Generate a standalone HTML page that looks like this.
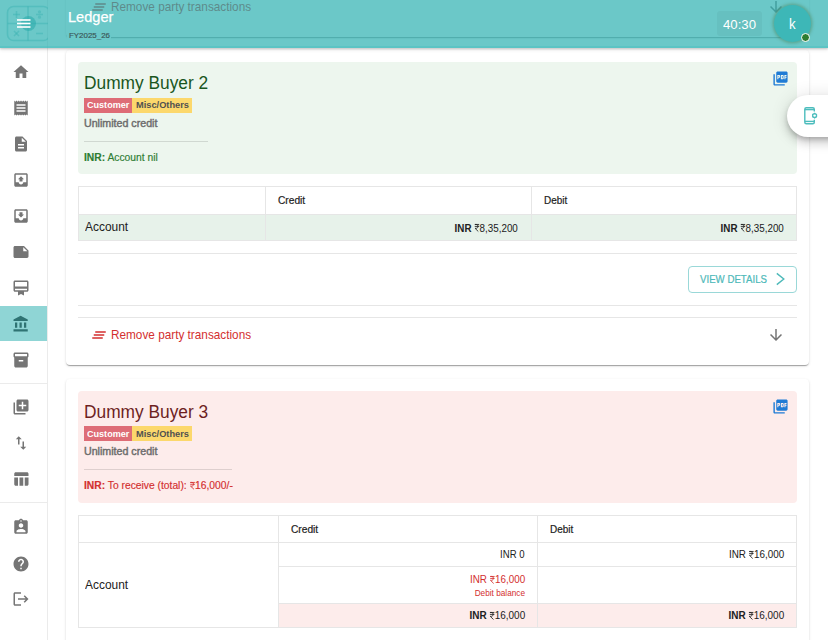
<!DOCTYPE html><html><head><meta charset="utf-8"><style>
html,body{margin:0;padding:0;width:828px;height:640px;overflow:hidden;background:#fff;font-family:"Liberation Sans", sans-serif;}
</style></head><body>
<div style="position:absolute;left:66px;top:-200px;width:743px;height:236.5px;background:#fff;border-radius:0 0 4px 4px;box-shadow:0 2px 1px -1px rgba(0,0,0,.2),0 1px 1px 0 rgba(0,0,0,.14),0 1px 3px 0 rgba(0,0,0,.12);"></div>
<svg style="position:absolute;left:89.75px;top:-2.0px;" width="18" height="18" viewBox="0 0 24 24"><path fill="#d32f2f" d="M5 13h14v-2H5v2zm-2 4h14v-2H3v2zM7 7v2h14V7H7z"/></svg>
<div style="position:absolute;top:-0.12px;font-size:11.9px;line-height:15px;color:#d32f2f;white-space:pre;left:111.4px;transform:scaleX(0.9905);transform-origin:left center;"><span style="font-weight:normal">Remove party transactions</span></div>
<svg style="position:absolute;left:767px;top:-1.8000000000000007px;" width="18" height="18" viewBox="0 0 24 24"><path fill="#757575" d="M20 12l-1.41-1.41L13 16.17V4h-2v12.17l-5.58-5.59L4 12l8 8 8-8z"/></svg>
<div style="position:absolute;left:66px;top:50px;width:743px;height:315px;background:#fff;border-radius:4px;box-shadow:0 2px 1px -1px rgba(0,0,0,.2),0 1px 1px 0 rgba(0,0,0,.14),0 1px 3px 0 rgba(0,0,0,.12);"></div>
<div style="position:absolute;left:78px;top:62px;width:719px;height:112px;background:#edf6ee;border-radius:4px;"></div>
<div style="position:absolute;top:72.34px;font-size:17.5px;line-height:23px;color:#1a561e;white-space:pre;left:83.9px;transform:scaleX(0.9900);transform-origin:left center;"><span style="font-weight:normal">Dummy Buyer 2</span></div>
<div style="position:absolute;left:84px;top:98px;width:48px;height:15px;background:#de6c76;"></div>
<div style="position:absolute;top:99.38px;font-size:9.0px;line-height:12px;color:#fff;white-space:pre;left:87px;transform:scaleX(1.0069);transform-origin:left center;"><span style="font-weight:bold">Customer</span></div>
<div style="position:absolute;left:132px;top:98px;width:60px;height:15px;background:#fcd86c;"></div>
<div style="position:absolute;top:99.38px;font-size:9.0px;line-height:12px;color:#505050;white-space:pre;left:135.6px;transform:scaleX(1.0288);transform-origin:left center;"><span style="font-weight:bold">Misc/Others</span></div>
<div style="position:absolute;top:117.03px;font-size:10.0px;line-height:13px;color:#6c6c6c;white-space:pre;left:83.7px;transform:scaleX(1.0651);transform-origin:left center;-webkit-text-stroke:0.4px #6c6c6c;"><span style="font-weight:normal">Unlimited credit</span></div>
<div style="position:absolute;left:84px;top:141px;width:124px;height:1px;background:rgba(0,0,0,0.12);"></div>
<div style="position:absolute;top:150.53px;font-size:10.0px;line-height:13px;color:#2e7d32;white-space:pre;left:83.7px;transform:scaleX(1.0293);transform-origin:left center;-webkit-text-stroke:0.15px #2e7d32;"><span style="font-weight:bold">INR:</span><span style="font-weight:normal"> Account nil</span></div>
<svg style="position:absolute;left:772.2px;top:70.1px;" width="17" height="17" viewBox="0 0 24 24"><path fill="#1f7bd5" d="M20 2H8c-1.1 0-2 .9-2 2v12c0 1.1.9 2 2 2h12c1.1 0 2-.9 2-2V4c0-1.1-.9-2-2-2zm-8.5 7.5c0 .83-.67 1.5-1.5 1.5H9v2H7.5V7H10c.83 0 1.5.67 1.5 1.5v1zm5 2c0 .83-.67 1.5-1.5 1.5h-2.5V7H15c.83 0 1.5.67 1.5 1.5v3zm4-3H19v1h1.5V11H19v2h-1.5V7h3v1.5zM9 9.5h1v-1H9v1zM4 6H2v14c0 1.1.9 2 2 2h14v-2H4V6zm10 5.5h1v-3h-1v3z"/></svg>
<div style="position:absolute;left:78px;top:186px;width:719px;height:55px;background:#fff;box-sizing:border-box;border:1px solid #e6e6e6;"></div>
<div style="position:absolute;left:79px;top:214px;width:717px;height:26px;background:#e7f2ea;border-top:1px solid #e6e6e6;box-sizing:border-box;"></div>
<div style="position:absolute;left:265px;top:187px;width:1px;height:54px;background:#e6e6e6;"></div>
<div style="position:absolute;left:531px;top:187px;width:1px;height:54px;background:#e6e6e6;"></div>
<div style="position:absolute;top:193.73px;font-size:10.0px;line-height:13px;color:#212121;white-space:pre;left:277.85px;transform:scaleX(1.0197);transform-origin:left center;-webkit-text-stroke:0.2px #212121;"><span style="font-weight:normal">Credit</span></div>
<div style="position:absolute;top:193.94px;font-size:10.0px;line-height:13px;color:#212121;white-space:pre;left:543.8px;transform:scaleX(0.9938);transform-origin:left center;-webkit-text-stroke:0.2px #212121;"><span style="font-weight:normal">Debit</span></div>
<div style="position:absolute;top:218.64px;font-size:12.0px;line-height:16px;color:#212121;white-space:pre;left:84.9px;transform:scaleX(0.9940);transform-origin:left center;"><span style="font-weight:normal">Account</span></div>
<div style="position:absolute;top:221.90px;font-size:10.4px;line-height:14px;color:#212121;white-space:pre;right:309.70000000000005px;transform:scaleX(0.9462);transform-origin:right center;"><span style="font-weight:bold">INR</span><span style="font-weight:normal"> </span><svg width="5.20" height="7.49" viewBox="0 0 10 14.4" preserveAspectRatio="none" style="vertical-align:baseline;display:inline-block;overflow:visible"><path fill="none" stroke="#212121" stroke-width="1.70" stroke-linejoin="miter" d="M0.6 0.9H9.6M0.6 4.6H9.6M1.2 0.9H3.4C5.8 0.9 7.1 2.4 7.1 4.6S5.8 8.3 3.4 8.3H1.2L7.8 14.4"/></svg><span style="display:inline-block;width:0.42px"></span><span style="font-weight:normal">8,35,200</span></div>
<div style="position:absolute;top:221.90px;font-size:10.4px;line-height:14px;color:#212121;white-space:pre;right:44px;transform:scaleX(0.9462);transform-origin:right center;"><span style="font-weight:bold">INR</span><span style="font-weight:normal"> </span><svg width="5.20" height="7.49" viewBox="0 0 10 14.4" preserveAspectRatio="none" style="vertical-align:baseline;display:inline-block;overflow:visible"><path fill="none" stroke="#212121" stroke-width="1.70" stroke-linejoin="miter" d="M0.6 0.9H9.6M0.6 4.6H9.6M1.2 0.9H3.4C5.8 0.9 7.1 2.4 7.1 4.6S5.8 8.3 3.4 8.3H1.2L7.8 14.4"/></svg><span style="display:inline-block;width:0.42px"></span><span style="font-weight:normal">8,35,200</span></div>
<div style="position:absolute;left:78px;top:253px;width:719px;height:1px;background:#e6e6e6;"></div>
<div style="position:absolute;left:688px;top:266px;width:109px;height:27px;box-sizing:border-box;border:1px solid #9ad8d8;border-radius:4px;"></div>
<div style="position:absolute;top:272.93px;font-size:10.3px;line-height:13px;color:#4db9b9;white-space:pre;left:700px;transform:scaleX(0.9390);transform-origin:left center;-webkit-text-stroke:0.2px #4db9b9;"><span style="font-weight:normal">VIEW DETAILS</span></div>
<svg style="position:absolute;left:770px;top:270px" width="20" height="18" viewBox="0 0 20 18"><path d="M6.8 3.4L13.8 9 6.8 14.6" fill="none" stroke="#4db9b9" stroke-width="1.4"/></svg>
<div style="position:absolute;left:78px;top:305px;width:719px;height:1px;background:#e6e6e6;"></div>
<div style="position:absolute;left:78px;top:317px;width:719px;height:1px;background:#e6e6e6;"></div>
<svg style="position:absolute;left:89.75px;top:326.0px;" width="18" height="18" viewBox="0 0 24 24"><path fill="#d32f2f" d="M5 13h14v-2H5v2zm-2 4h14v-2H3v2zM7 7v2h14V7H7z"/></svg>
<div style="position:absolute;top:327.88px;font-size:11.9px;line-height:15px;color:#d32f2f;white-space:pre;left:111.4px;transform:scaleX(0.9905);transform-origin:left center;"><span style="font-weight:normal">Remove party transactions</span></div>
<svg style="position:absolute;left:767px;top:326.2px;" width="18" height="18" viewBox="0 0 24 24"><path fill="#757575" d="M20 12l-1.41-1.41L13 16.17V4h-2v12.17l-5.58-5.59L4 12l8 8 8-8z"/></svg>
<div style="position:absolute;left:66px;top:379px;width:743px;height:400px;background:#fff;border-radius:4px;box-shadow:0 2px 1px -1px rgba(0,0,0,.2),0 1px 1px 0 rgba(0,0,0,.14),0 1px 3px 0 rgba(0,0,0,.12);"></div>
<div style="position:absolute;left:78px;top:391px;width:719px;height:112px;background:#fdeceb;border-radius:4px;"></div>
<div style="position:absolute;top:400.54px;font-size:17.5px;line-height:23px;color:#6d1f1f;white-space:pre;left:83.9px;transform:scaleX(0.9900);transform-origin:left center;"><span style="font-weight:normal">Dummy Buyer 3</span></div>
<div style="position:absolute;left:84px;top:426.2px;width:48px;height:15px;background:#de6c76;"></div>
<div style="position:absolute;top:427.58px;font-size:9.0px;line-height:12px;color:#fff;white-space:pre;left:87px;transform:scaleX(1.0069);transform-origin:left center;"><span style="font-weight:bold">Customer</span></div>
<div style="position:absolute;left:132px;top:426.2px;width:60px;height:15px;background:#fcd86c;"></div>
<div style="position:absolute;top:427.58px;font-size:9.0px;line-height:12px;color:#505050;white-space:pre;left:135.6px;transform:scaleX(1.0288);transform-origin:left center;"><span style="font-weight:bold">Misc/Others</span></div>
<div style="position:absolute;top:445.24px;font-size:10.0px;line-height:13px;color:#6c6c6c;white-space:pre;left:83.7px;transform:scaleX(1.0651);transform-origin:left center;-webkit-text-stroke:0.4px #6c6c6c;"><span style="font-weight:normal">Unlimited credit</span></div>
<div style="position:absolute;left:84px;top:469.2px;width:148px;height:1px;background:rgba(0,0,0,0.12);"></div>
<div style="position:absolute;top:478.74px;font-size:10.0px;line-height:13px;color:#d32f2f;white-space:pre;left:83.7px;transform:scaleX(1.0282);transform-origin:left center;-webkit-text-stroke:0.15px #d32f2f;"><span style="font-weight:bold">INR:</span><span style="font-weight:normal"> To receive (total): </span><svg width="5.00" height="7.20" viewBox="0 0 10 14.4" preserveAspectRatio="none" style="vertical-align:baseline;display:inline-block;overflow:visible"><path fill="none" stroke="#d32f2f" stroke-width="1.70" stroke-linejoin="miter" d="M0.6 0.9H9.6M0.6 4.6H9.6M1.2 0.9H3.4C5.8 0.9 7.1 2.4 7.1 4.6S5.8 8.3 3.4 8.3H1.2L7.8 14.4"/></svg><span style="display:inline-block;width:0.40px"></span><span style="font-weight:normal">16,000/-</span></div>
<svg style="position:absolute;left:772.2px;top:398.3px;" width="17" height="17" viewBox="0 0 24 24"><path fill="#1f7bd5" d="M20 2H8c-1.1 0-2 .9-2 2v12c0 1.1.9 2 2 2h12c1.1 0 2-.9 2-2V4c0-1.1-.9-2-2-2zm-8.5 7.5c0 .83-.67 1.5-1.5 1.5H9v2H7.5V7H10c.83 0 1.5.67 1.5 1.5v1zm5 2c0 .83-.67 1.5-1.5 1.5h-2.5V7H15c.83 0 1.5.67 1.5 1.5v3zm4-3H19v1h1.5V11H19v2h-1.5V7h3v1.5zM9 9.5h1v-1H9v1zM4 6H2v14c0 1.1.9 2 2 2h14v-2H4V6zm10 5.5h1v-3h-1v3z"/></svg>
<div style="position:absolute;left:78px;top:514.5px;width:719px;height:113px;background:#fff;box-sizing:border-box;border:1px solid #e6e6e6;"></div>
<div style="position:absolute;left:279px;top:603px;width:517px;height:24px;background:#fdeceb;"></div>
<div style="position:absolute;left:79px;top:542px;width:717px;height:1px;background:#e6e6e6;"></div>
<div style="position:absolute;left:279px;top:566px;width:517px;height:1px;background:#e6e6e6;"></div>
<div style="position:absolute;left:279px;top:603px;width:517px;height:1px;background:#e6e6e6;"></div>
<div style="position:absolute;left:278px;top:515px;width:1px;height:112px;background:#e6e6e6;"></div>
<div style="position:absolute;left:537px;top:515px;width:1px;height:112px;background:#e6e6e6;"></div>
<div style="position:absolute;top:522.93px;font-size:10.0px;line-height:13px;color:#212121;white-space:pre;left:290.8px;transform:scaleX(1.0197);transform-origin:left center;-webkit-text-stroke:0.2px #212121;"><span style="font-weight:normal">Credit</span></div>
<div style="position:absolute;top:522.93px;font-size:10.0px;line-height:13px;color:#212121;white-space:pre;left:550.3px;transform:scaleX(0.9938);transform-origin:left center;-webkit-text-stroke:0.2px #212121;"><span style="font-weight:normal">Debit</span></div>
<div style="position:absolute;top:576.84px;font-size:12.0px;line-height:16px;color:#212121;white-space:pre;left:84.9px;transform:scaleX(0.9940);transform-origin:left center;"><span style="font-weight:normal">Account</span></div>
<div style="position:absolute;top:548.40px;font-size:10.4px;line-height:14px;color:#212121;white-space:pre;right:303px;transform:scaleX(0.9216);transform-origin:right center;"><span style="font-weight:normal">INR 0</span></div>
<div style="position:absolute;top:548.40px;font-size:10.4px;line-height:14px;color:#212121;white-space:pre;right:44px;transform:scaleX(0.9497);transform-origin:right center;"><span style="font-weight:normal">INR </span><svg width="5.20" height="7.49" viewBox="0 0 10 14.4" preserveAspectRatio="none" style="vertical-align:baseline;display:inline-block;overflow:visible"><path fill="none" stroke="#212121" stroke-width="1.70" stroke-linejoin="miter" d="M0.6 0.9H9.6M0.6 4.6H9.6M1.2 0.9H3.4C5.8 0.9 7.1 2.4 7.1 4.6S5.8 8.3 3.4 8.3H1.2L7.8 14.4"/></svg><span style="display:inline-block;width:0.42px"></span><span style="font-weight:normal">16,000</span></div>
<div style="position:absolute;top:573.20px;font-size:10.4px;line-height:14px;color:#d32f2f;white-space:pre;right:303px;transform:scaleX(0.9497);transform-origin:right center;"><span style="font-weight:normal">INR </span><svg width="5.20" height="7.49" viewBox="0 0 10 14.4" preserveAspectRatio="none" style="vertical-align:baseline;display:inline-block;overflow:visible"><path fill="none" stroke="#d32f2f" stroke-width="1.70" stroke-linejoin="miter" d="M0.6 0.9H9.6M0.6 4.6H9.6M1.2 0.9H3.4C5.8 0.9 7.1 2.4 7.1 4.6S5.8 8.3 3.4 8.3H1.2L7.8 14.4"/></svg><span style="display:inline-block;width:0.42px"></span><span style="font-weight:normal">16,000</span></div>
<div style="position:absolute;top:586.68px;font-size:9.0px;line-height:12px;color:#d32f2f;white-space:pre;right:303px;transform:scaleX(0.9157);transform-origin:right center;"><span style="font-weight:normal">Debit balance</span></div>
<div style="position:absolute;top:609.40px;font-size:10.4px;line-height:14px;color:#212121;white-space:pre;right:303px;transform:scaleX(0.9566);transform-origin:right center;"><span style="font-weight:bold">INR</span><span style="font-weight:normal"> </span><svg width="5.20" height="7.49" viewBox="0 0 10 14.4" preserveAspectRatio="none" style="vertical-align:baseline;display:inline-block;overflow:visible"><path fill="none" stroke="#212121" stroke-width="1.70" stroke-linejoin="miter" d="M0.6 0.9H9.6M0.6 4.6H9.6M1.2 0.9H3.4C5.8 0.9 7.1 2.4 7.1 4.6S5.8 8.3 3.4 8.3H1.2L7.8 14.4"/></svg><span style="display:inline-block;width:0.42px"></span><span style="font-weight:normal">16,000</span></div>
<div style="position:absolute;top:609.40px;font-size:10.4px;line-height:14px;color:#212121;white-space:pre;right:44px;transform:scaleX(0.9566);transform-origin:right center;"><span style="font-weight:bold">INR</span><span style="font-weight:normal"> </span><svg width="5.20" height="7.49" viewBox="0 0 10 14.4" preserveAspectRatio="none" style="vertical-align:baseline;display:inline-block;overflow:visible"><path fill="none" stroke="#212121" stroke-width="1.70" stroke-linejoin="miter" d="M0.6 0.9H9.6M0.6 4.6H9.6M1.2 0.9H3.4C5.8 0.9 7.1 2.4 7.1 4.6S5.8 8.3 3.4 8.3H1.2L7.8 14.4"/></svg><span style="display:inline-block;width:0.42px"></span><span style="font-weight:normal">16,000</span></div>
<div style="position:absolute;left:0;top:0;width:47px;height:640px;background:#fff;border-right:1px solid #ebebeb;"></div>
<div style="position:absolute;left:0px;top:306px;width:47px;height:35px;background:#8fd5d5;"></div>
<svg style="position:absolute;left:12px;top:63.0px;" width="18" height="18" viewBox="0 0 24 24"><path fill="#757575" d="M10 20v-6h4v6h5v-8h3L12 3 2 12h3v8z"/></svg>
<svg style="position:absolute;left:12px;top:99.0px;" width="18" height="18" viewBox="0 0 24 24"><path fill="#757575" d="M18 17H6v-2h12v2zm0-4H6v-2h12v2zm0-4H6V7h12v2zM3 22l1.5-1.5L6 22l1.5-1.5L9 22l1.5-1.5L12 22l1.5-1.5L15 22l1.5-1.5L18 22l1.5-1.5L21 22V2l-1.5 1.5L18 2l-1.5 1.5L15 2l-1.5 1.5L12 2l-1.5 1.5L9 2 7.5 3.5 6 2 4.5 3.5 3 2v20z"/></svg>
<svg style="position:absolute;left:12px;top:135.0px;" width="18" height="18" viewBox="0 0 24 24"><path fill="#757575" d="M14 2H6c-1.1 0-1.99.9-1.99 2L4 20c0 1.1.89 2 1.99 2H18c1.1 0 2-.9 2-2V8l-6-6zm2 16H8v-2h8v2zm0-4H8v-2h8v2zm-3-5V3.5L18.5 9H13z"/></svg>
<svg style="position:absolute;left:12px;top:171.0px;" width="18" height="18" viewBox="0 0 24 24"><path fill="#757575" d="M19 3H5c-1.1 0-2 .9-2 2v14c0 1.1.9 2 2 2h14c1.1 0 2-.9 2-2V5c0-1.1-.9-2-2-2zm0 12h-4c0 1.66-1.34 3-3 3s-3-1.34-3-3H5V5h14v10zM8 11h2v3h4v-3h2l-4-4-4 4z"/></svg>
<svg style="position:absolute;left:12px;top:207.0px;" width="18" height="18" viewBox="0 0 24 24"><path fill="#757575" d="M19 3H5c-1.1 0-2 .9-2 2v14c0 1.1.9 2 2 2h14c1.1 0 2-.9 2-2V5c0-1.1-.9-2-2-2zm0 12h-4c0 1.66-1.34 3-3 3s-3-1.34-3-3H5V5h14v10zM16 10h-2V7h-4v3H8l4 4 4-4z"/></svg>
<svg style="position:absolute;left:12px;top:243.0px;" width="18" height="18" viewBox="0 0 24 24"><path fill="#757575" d="M22 10l-6-6H4c-1.1 0-2 .9-2 2v12.01c0 1.1.9 1.99 2 1.99l16-.01c1.1 0 2-.89 2-1.99v-8zm-7-4.5l5.5 5.5H15V5.5z"/></svg>
<svg style="position:absolute;left:12px;top:278.5px;" width="18" height="18" viewBox="0 0 24 24"><path fill="#757575" d="M20 2H4c-1.11 0-2 .89-2 2v11c0 1.11.89 2 2 2h4v5l4-2 4 2v-5h4c1.11 0 2-.89 2-2V4c0-1.11-.89-2-2-2zm0 13H4v-2h16v2zm0-5H4V4h16v6z"/></svg>
<svg style="position:absolute;left:12px;top:314.5px;" width="18" height="18" viewBox="0 0 24 24"><path fill="#2f7373" d="M4 10v7h3v-7H4zm6 0v7h3v-7h-3zM2 22h19v-3H2v3zm14-12v7h3v-7h-3zm-4.5-9L2 6v2h19V6l-9.5-5z"/></svg>
<svg style="position:absolute;left:12px;top:350.5px;" width="18" height="18" viewBox="0 0 24 24"><path fill="#757575" d="M20 2H4c-1 0-2 .9-2 2v3.01c0 .72.43 1.34 1 1.69V20c0 1.1 1.1 2 2 2h14c.9 0 2-.9 2-2V8.7c.57-.35 1-.97 1-1.69V4c0-1.1-1-2-2-2zm-5 12H9v-2h6v2zm5-7H4V4l16-.02V7z"/></svg>
<svg style="position:absolute;left:12px;top:398.0px;" width="18" height="18" viewBox="0 0 24 24"><path fill="#757575" d="M4 6H2v14c0 1.1.9 2 2 2h14v-2H4V6zm16-4H8c-1.1 0-2 .9-2 2v12c0 1.1.9 2 2 2h12c1.1 0 2-.9 2-2V4c0-1.1-.9-2-2-2zm-1 9h-4v4h-2v-4H9V9h4V5h2v4h4v2z"/></svg>
<svg style="position:absolute;left:12px;top:434.0px;" width="18" height="18" viewBox="0 0 24 24"><path fill="#757575" d="M16 17.01V10h-2v7.01h-3L15 21l4-3.99h-3zM9 3L5 6.99h3V14h2V6.99h3L9 3z"/></svg>
<svg style="position:absolute;left:12px;top:470.0px;" width="18" height="18" viewBox="0 0 24 24"><path fill="#757575" d="M10 10.02h5V21h-5zM17 21h3c1.1 0 2-.9 2-2v-9h-5v11zm3-18H5c-1.1 0-2 .9-2 2v3h19V5c0-1.1-.9-2-2-2zM3 19c0 1.1.9 2 2 2h3V10H3v9z"/></svg>
<svg style="position:absolute;left:12px;top:518.0px;" width="18" height="18" viewBox="0 0 24 24"><path fill="#757575" d="M19 3h-4.18C14.4 1.84 13.3 1 12 1c-1.3 0-2.4.84-2.82 2H5c-1.1 0-2 .9-2 2v14c0 1.1.9 2 2 2h14c1.1 0 2-.9 2-2V5c0-1.1-.9-2-2-2zm-7 0c.55 0 1 .45 1 1s-.45 1-1 1-1-.45-1-1 .45-1 1-1zm0 4c1.66 0 3 1.34 3 3s-1.34 3-3 3-3-1.34-3-3 1.34-3 3-3zm6 12H6v-1.4c0-2 4-3.1 6-3.1s6 1.1 6 3.1V19z"/></svg>
<svg style="position:absolute;left:12px;top:554.5px;" width="18" height="18" viewBox="0 0 24 24"><path fill="#757575" d="M12 2C6.48 2 2 6.48 2 12s4.48 10 10 10 10-4.48 10-10S17.52 2 12 2zm1 17h-2v-2h2v2zm2.07-7.75l-.9.92C13.45 12.9 13 13.5 13 15h-2v-.5c0-1.1.45-2.1 1.17-2.83l1.24-1.26c.37-.36.59-.86.59-1.41 0-1.1-.9-2-2-2s-2 .9-2 2H8c0-2.21 1.79-4 4-4s4 1.79 4 4c0 .88-.36 1.68-.93 2.25z"/></svg>
<svg style="position:absolute;left:12px;top:590.0px;" width="18" height="18" viewBox="0 0 24 24"><path fill="#757575" d="M17 7l-1.41 1.41L18.17 11H8v2h10.17l-2.58 2.58L17 17l5-5zM4 5h8V3H4c-1.1 0-2 .9-2 2v14c0 1.1.9 2 2 2h8v-2H4V5z"/></svg>
<div style="position:absolute;left:0px;top:383px;width:47px;height:1px;background:#ebebeb;"></div>
<div style="position:absolute;left:0px;top:502px;width:47px;height:1px;background:#ebebeb;"></div>
<div style="position:absolute;left:0;top:0;width:828px;height:47.5px;background:rgba(44,176,176,0.70);box-shadow:0 1px 2px rgba(0,0,0,.18),0 2px 4px rgba(0,0,0,.08);"></div>
<div style="position:absolute;left:0px;top:45.5px;width:828px;height:2px;background:rgba(60,190,190,0.3);"></div>
<svg style="position:absolute;left:0;top:0" width="48" height="47" viewBox="0 0 48 47">
<g fill="none" stroke="rgba(60,178,178,0.45)" stroke-width="1.6">
<rect x="7.5" y="6.5" width="42" height="34" rx="6"/>
<line x1="28" y1="6.5" x2="28" y2="40.5"/><line x1="7.5" y1="23.5" x2="49" y2="23.5"/>
<line x1="13" y1="14.5" x2="20" y2="14.5"/><line x1="16.5" y1="11" x2="16.5" y2="18"/>
<line x1="36" y1="14.5" x2="43" y2="14.5"/><circle cx="39.5" cy="11.8" r="0.8"/><circle cx="39.5" cy="17.2" r="0.8"/>
<line x1="14" y1="31" x2="19" y2="36"/><line x1="19" y1="31" x2="14" y2="36"/>
<line x1="36" y1="33.5" x2="43" y2="33.5"/>
</g>
<circle cx="28.5" cy="23.5" r="7.5" fill="rgba(40,170,170,0.55)"/>
<rect x="17" y="19.2" width="13.5" height="1.6" fill="#fff"/>
<rect x="17" y="22.7" width="13.5" height="1.6" fill="#fff"/>
<rect x="17" y="26.2" width="13.5" height="1.6" fill="#fff"/>
</svg>
<div style="position:absolute;top:8.25px;font-size:14.0px;line-height:18px;color:#fff;white-space:pre;left:68.4px;transform:scaleX(1.0414);transform-origin:left center;-webkit-text-stroke:0.25px #fff;"><span style="font-weight:normal">Ledger</span></div>
<div style="position:absolute;left:67px;top:31px;width:44px;height:9px;background:rgb(107,200,200);"></div>
<div style="position:absolute;top:30.67px;font-size:7.6px;line-height:10px;color:#3b5858;white-space:pre;left:68.7px;transform:scaleX(1.0432);transform-origin:left center;-webkit-text-stroke:0.18px #3b5858;"><span style="font-weight:normal">FY2025_26</span></div>
<div style="position:absolute;left:717px;top:11px;width:45px;height:25px;background:rgba(0,0,0,0.04);border-radius:3px;"></div>
<div style="position:absolute;top:15.50px;font-size:13.0px;line-height:17px;color:#fff;white-space:pre;left:723px;transform:scaleX(1.0144);transform-origin:left center;"><span style="font-weight:normal">40:30</span></div>
<div style="position:absolute;left:774px;top:5px;width:37px;height:37px;border-radius:50%;background:#3db7b7;box-shadow:0 0 3px 1.5px rgba(70,120,70,0.4);"></div>
<div style="position:absolute;top:13.80px;font-size:15px;line-height:20px;color:#fff;white-space:pre;left:789.4px;transform:scaleX(0.8800);transform-origin:left center;"><span style="font-weight:normal">k</span></div>
<div style="position:absolute;left:800.8px;top:32.5px;width:7px;height:7px;border-radius:50%;background:#2e7d32;border:1.3px solid #fff;"></div>
<div style="position:absolute;left:787px;top:94.8px;width:80px;height:41.8px;border-radius:21px;background:#fff;box-shadow:0 3px 5px -1px rgba(0,0,0,.2),0 6px 10px 0 rgba(0,0,0,.14),0 1px 18px 0 rgba(0,0,0,.12);"></div>
<svg style="position:absolute;left:800.6px;top:104.2px" width="22" height="22" viewBox="0 0 22 22">
<g fill="none" stroke="#4dbdbd" stroke-width="1.4">
<path d="M13.3 7.4V5.2c0-.9-.6-1.5-1.5-1.5H5.3c-.9 0-1.5.6-1.5 1.5v13.1c0 .9.6 1.5 1.5 1.5h6.5c.9 0 1.5-.6 1.5-1.5v-2.5"/>
<line x1="3.8" y1="5.6" x2="13.3" y2="5.6"/><line x1="3.8" y1="17.4" x2="13.3" y2="17.4"/>
<circle cx="13.6" cy="11.6" r="1.9"/></g>
<g stroke="#4dbdbd" stroke-width="1.1"><line x1="13.6" y1="8.8" x2="13.6" y2="14.4"/><line x1="11.2" y1="10.2" x2="16.0" y2="13.0"/><line x1="11.2" y1="13.0" x2="16.0" y2="10.2"/></g>
<circle cx="13.6" cy="11.6" r="1.2" fill="#fff"/>
</svg>
</body></html>
